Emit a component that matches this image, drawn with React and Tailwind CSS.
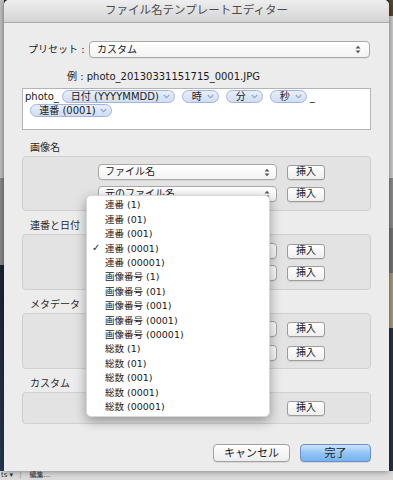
import React from "react";

const FONT = { fontFamily: '"DejaVu Sans", "Noto Sans CJK JP", sans-serif' };

function Arrows({ className = "" }) {
  return (
    <svg width="6" height="9" viewBox="0 0 6 9" className={className}>
      <path d="M0.5 3.5 L3 0.8 L5.5 3.5 Z" fill="#555" />
      <path d="M0.5 5.5 L3 8.2 L5.5 5.5 Z" fill="#555" />
    </svg>
  );
}

function Select({ text, className = "" }) {
  return (
    <div
      className={
        "h-[16px] rounded-[4px] border border-[#a8a8a8] bg-gradient-to-b from-white to-[#f3f3f3] flex items-center pl-[6px] pr-[6px] text-[10px] text-[#1a1a1a] shadow-[0_1px_0_rgba(0,0,0,0.05)] " +
        className
      }
    >
      <span className="flex-1 leading-none whitespace-nowrap overflow-hidden">{text}</span>
      <Arrows />
    </div>
  );
}

function InsertBtn() {
  return (
    <div className="h-[15px] w-[38px] rounded-[3px] border border-[#9c9c9c] bg-gradient-to-b from-white to-[#eeeeee] flex items-center justify-center text-[10px] leading-none text-[#1a1a1a] shadow-[0_1px_0_rgba(0,0,0,0.08)]">
      挿入
    </div>
  );
}

function Row({ text }) {
  return (
    <div className="flex items-center pl-[75px] gap-[10px] h-[16px]">
      <Select text={text} className="w-[179px]" />
      <InsertBtn />
    </div>
  );
}

function Pill({ text, w }) {
  return (
    <div
      className="h-[13px] rounded-full border border-[#9fb5df] bg-gradient-to-b from-[#e8effb] to-[#d0ddf4] flex items-center text-[10px] leading-none text-[#1a1a1a] shrink-0"
      style={{ width: w }}
    >
      <span className="flex-1 text-center pl-[4px] whitespace-nowrap">{text}</span>
      <svg width="7" height="5" viewBox="0 0 7 5" className="mr-[4px] shrink-0">
        <path d="M0.8 1 L3.5 3.8 L6.2 1" stroke="#8fa0bf" strokeWidth="1.1" fill="none" />
      </svg>
    </div>
  );
}

function Label({ text }) {
  return (
    <div className="mt-[8px] mb-px h-[14px] pl-[8px] flex items-center text-[10px] leading-none text-[#2a2a2a]">
      {text}
    </div>
  );
}

const menuItems = [
  "連番 (1)",
  "連番 (01)",
  "連番 (001)",
  "連番 (0001)",
  "連番 (00001)",
  "画像番号 (1)",
  "画像番号 (01)",
  "画像番号 (001)",
  "画像番号 (0001)",
  "画像番号 (00001)",
  "総数 (1)",
  "総数 (01)",
  "総数 (001)",
  "総数 (0001)",
  "総数 (00001)",
];

export default function App() {
  return (
    <div className="w-[393px] h-[480px] overflow-hidden flex flex-col bg-[#2a3140]" style={FONT}>
      <div className="flex h-[471px]">
        <div className="w-[4px] flex flex-col">
          <div className="h-[178px] bg-[#c4c4c4]" />
          <div className="h-[87px] bg-[#8c8c8c]" />
          <div className="flex-1 bg-gradient-to-b from-[#1c2434] to-[#283a55]" />
        </div>

        <div className="w-[385px] relative flex flex-col bg-[#ececec] rounded-t-[5px] shadow-[0_0_6px_rgba(0,0,0,0.5)]">
          <div className="h-[23px] shrink-0 rounded-t-[5px] bg-gradient-to-b from-[#eeeeee] to-[#d4d4d4] border-b border-[#a9a9a9] flex items-center justify-center text-[11.5px] leading-none text-[#4a4a4a]">
            ファイル名テンプレートエディター
          </div>

          <div className="px-[18px] flex flex-col">
            <div className="mt-[18px] flex items-center h-[17px]">
              <div className="ml-[6px] w-[52px] text-[10px] leading-none text-[#1a1a1a] whitespace-nowrap">
                プリセット :
              </div>
              <Select text="カスタム" className="ml-[9px] flex-1 mr-px h-[17px] pl-[7px] pr-[8px]" />
            </div>

            <div className="mt-[12px] h-[14px] ml-[45px] flex items-center text-[10px] leading-none text-[#1a1a1a] whitespace-nowrap">
              例 : photo_20130331151715_0001.JPG
            </div>

            <div className="mt-[4px] h-[42px] bg-white border border-[#b4b4b4] pl-[2px] pt-[1px] flex flex-col gap-px">
              <div className="flex items-center h-[13px] text-[10px] leading-none text-[#1a1a1a]">
                <span className="mr-[3px]">photo_</span>
                <Pill text="日付 (YYYYMMDD)" w={113} />
                <div className="w-[7px]" />
                <Pill text="時" w={37} />
                <div className="w-[7px]" />
                <Pill text="分" w={37} />
                <div className="w-[7px]" />
                <Pill text="秒" w={37} />
                <span className="ml-[3px]">_</span>
              </div>
              <div className="flex items-center h-[13px] pl-[5px]">
                <Pill text="連番 (0001)" w={82} />
              </div>
            </div>

            <div className="mt-[3px]" />
            <Label text="画像名" />
            <div className="h-[55px] rounded-[4px] border border-[#d0d0d0] bg-[#e3e3e3] pt-[7px] flex flex-col gap-[6px]">
              <Row text="ファイル名" />
              <Row text="元のファイル名" />
            </div>

            <Label text="連番と日付" />
            <div className="h-[56px] rounded-[4px] border border-[#d0d0d0] bg-[#e3e3e3] pt-[8px] flex flex-col gap-[6px]">
              <Row text="" />
              <Row text="" />
            </div>

            <Label text="メタデータ" />
            <div className="h-[56px] rounded-[4px] border border-[#d0d0d0] bg-[#e3e3e3] pt-[7px] flex flex-col gap-[8px]">
              <Row text="" />
              <Row text="" />
            </div>

            <Label text="カスタム" />
            <div className="h-[32px] rounded-[4px] border border-[#d0d0d0] bg-[#e3e3e3] pt-[7px] flex flex-col">
              <div className="flex items-center h-[16px] pl-[264px]">
                <InsertBtn />
              </div>
            </div>

            <div className="mt-[20px] flex justify-end gap-[10px]">
              <div className="h-[18px] w-[77px] rounded-[4px] border border-[#a0a0a0] bg-gradient-to-b from-white to-[#ededed] flex items-center justify-center text-[11px] leading-none text-[#1a1a1a] shadow-[0_1px_0_rgba(0,0,0,0.08)]">
                キャンセル
              </div>
              <div className="h-[18px] w-[71px] rounded-[4px] border border-[#6a8fc4] bg-gradient-to-b from-[#cfe4fb] via-[#92c4f3] to-[#74b3ef] flex items-center justify-center text-[11px] leading-none text-[#1a1a1a] shadow-[0_1px_0_rgba(0,0,0,0.1)]">
                完了
              </div>
            </div>
          </div>

          <div className="absolute left-[82px] top-[195px] w-[184px] h-[222px] bg-white rounded-[5px] shadow-[0_4px_12px_rgba(0,0,0,0.35)] border border-[#d8d8d8] py-[2px]">
            {menuItems.map((t, i) => (
              <div key={i} className="h-[14.4px] flex items-center text-[9.5px] leading-none text-[#1a1a1a] whitespace-nowrap">
                <span className="w-[18px] pl-[5px] text-[10px]">{i === 3 ? "✓" : ""}</span>
                <span>{t}</span>
              </div>
            ))}
          </div>
        </div>

        <div className="w-[4px] flex flex-col">
          <div className="h-[16px] bg-[#5c4626]" />
          <div className="h-[162px] bg-[#cfcfcf]" />
          <div className="h-[50px] bg-[#8e8e8e]" />
          <div className="h-[45px] bg-[#767676]" />
          <div className="h-[55px] bg-[#a99c7e]" />
          <div className="flex-1 bg-[#263248]" />
        </div>
      </div>
      <div className="h-[9px] bg-[#dadada] overflow-hidden flex items-center pl-[1px] text-[7px] leading-none text-[#333] whitespace-nowrap">
        <span>ts ▾</span>
        <span className="ml-[6px] mr-[8px] text-[#999]">|</span>
        <span>編集...</span>
      </div>
    </div>
  );
}
